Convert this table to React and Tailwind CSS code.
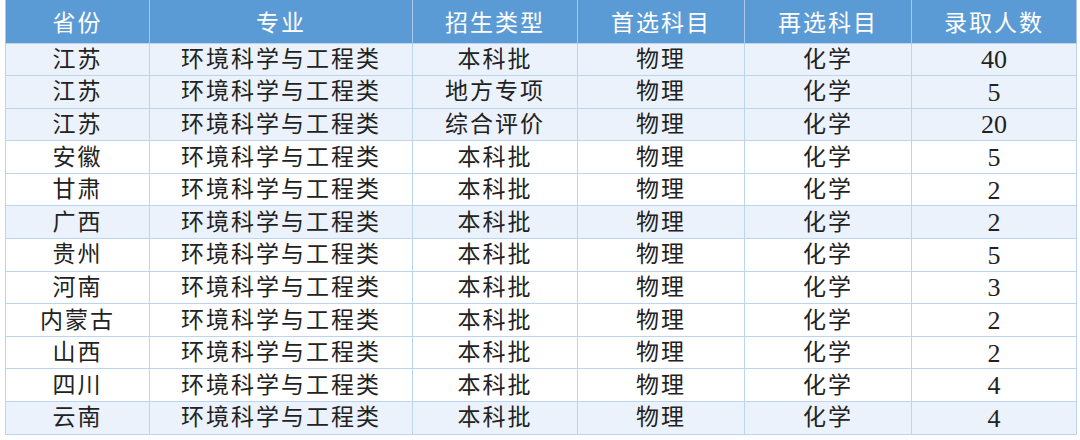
import React from "react";

const rows = [
  ["江苏", "环境科学与工程类", "本科批", "物理", "化学", "40", true],
  ["江苏", "环境科学与工程类", "地方专项", "物理", "化学", "5", true],
  ["江苏", "环境科学与工程类", "综合评价", "物理", "化学", "20", true],
  ["安徽", "环境科学与工程类", "本科批", "物理", "化学", "5", false],
  ["甘肃", "环境科学与工程类", "本科批", "物理", "化学", "2", false],
  ["广西", "环境科学与工程类", "本科批", "物理", "化学", "2", true],
  ["贵州", "环境科学与工程类", "本科批", "物理", "化学", "5", false],
  ["河南", "环境科学与工程类", "本科批", "物理", "化学", "3", false],
  ["内蒙古", "环境科学与工程类", "本科批", "物理", "化学", "2", false],
  ["山西", "环境科学与工程类", "本科批", "物理", "化学", "2", false],
  ["四川", "环境科学与工程类", "本科批", "物理", "化学", "4", false],
  ["云南", "环境科学与工程类", "本科批", "物理", "化学", "4", true],
];

const headers = ["省份", "专业", "招生类型", "首选科目", "再选科目", "录取人数"];
const widths = ["w-[144px]", "w-[263px]", "w-[165px]", "w-[167px]", "w-[167px]", "w-[165px]"];

export default function App() {
  return (
    <div className="w-[1080px] h-[440px] bg-white pl-[5px] font-['Liberation_Serif','Noto_Sans_CJK_SC',serif]">
      <table className="table-fixed border-collapse w-[1071px]">
        <colgroup>
          {widths.map((w, i) => (
            <col key={i} className={w} />
          ))}
        </colgroup>
        <thead>
          <tr className="h-[43px] bg-[#5b9bd5]">
            {headers.map((h, i) => (
              <th
                key={i}
                className="border-x border-[#a9c8ea] p-0 text-center align-middle font-normal text-white text-[23px] tracking-[2px] leading-none font-['Noto_Sans_CJK_SC',sans-serif]"
              >
                {h}
              </th>
            ))}
          </tr>
        </thead>
        <tbody>
          {rows.map((r, ri) => (
            <tr key={ri} className={`h-[32.6px] ${r[6] ? "bg-[#ebf2fb]" : "bg-white"}`}>
              {r.slice(0, 5).map((c, ci) => (
                <td
                  key={ci}
                  className="border border-[#bcd5ef] p-0 text-center align-middle text-[#222222] text-[23px] tracking-[2px] leading-none"
                >
                  {c}
                </td>
              ))}
              <td className="border border-[#bcd5ef] p-0 pt-[2px] text-center align-middle text-[#222222] text-[26px] leading-none">
                {r[5]}
              </td>
            </tr>
          ))}
        </tbody>
      </table>
    </div>
  );
}
